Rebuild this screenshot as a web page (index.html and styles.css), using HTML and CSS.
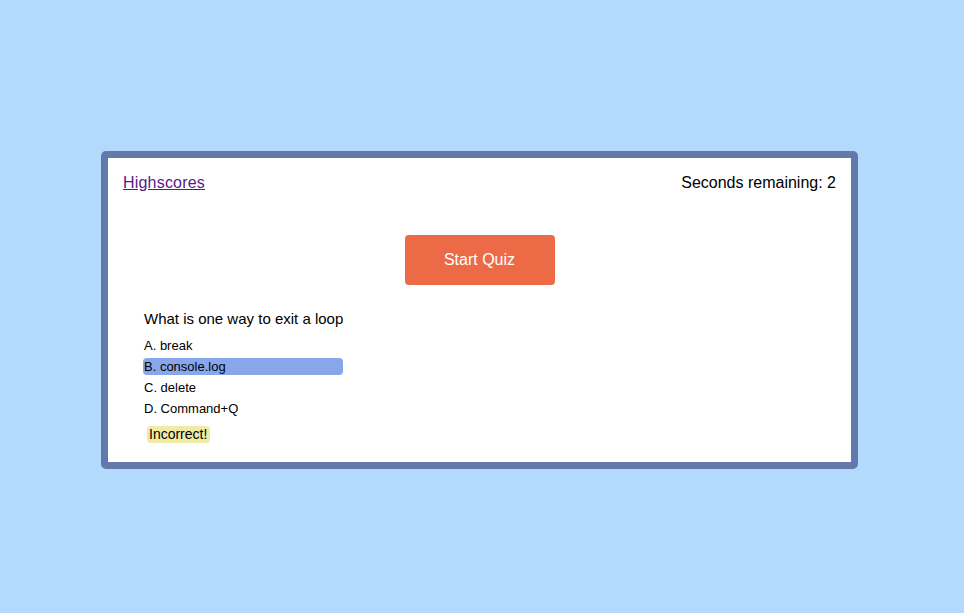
FILE: index.html
```html
<!DOCTYPE html>
<html>
<head>
<meta charset="utf-8">
<title>Quiz</title>
<link rel="stylesheet" href="styles.css">
</head>
<body>
<div class="card">
  <header class="top">
    <a class="hs" href="#">Highscores</a>
    <span class="timer">Seconds remaining: 2</span>
  </header>
  <div class="start-wrap"><button class="start">Start Quiz</button></div>
  <section class="quiz">
    <p class="question">What is one way to exit a loop</p>
    <ul class="options">
      <li>A. break</li>
      <li class="picked">B. console.log</li>
      <li>C. delete</li>
      <li>D. Command+Q</li>
    </ul>
    <span class="result">Incorrect!</span>
  </section>
</div>
</body>
</html>
```
FILE: styles.css
```css
html, body { margin: 0; padding: 0; }
body {
  background: #b3d9fd;
  font-family: "Liberation Sans", Arial, sans-serif;
  color: #000;
  min-height: 613px;
  overflow: hidden;
}
.card {
  margin: 151px 0 0 101px;
  width: 743px;
  background: #fff;
  border: 7px solid #6479ab;
  border-radius: 5px;
  padding-bottom: 19px;
}
.top {
  display: flex;
  justify-content: space-between;
  padding: 15px 15px 0 15px;
  font-size: 16px;
  line-height: 19px;
}
.hs { color: #551a8b; text-decoration: underline; letter-spacing: 0.2px; }
.start-wrap { display: flex; justify-content: center; margin-top: 43px; }
.start {
  width: 150px;
  height: 50px;
  background: #ec6b46;
  color: #fff;
  border: none;
  border-radius: 4px;
  font-family: inherit;
  font-size: 16px;
}
.quiz { padding-left: 35px; margin-top: 25px; }
.question { margin: 0 0 0 1px; font-size: 15px; line-height: 18px; }
.options { list-style: none; margin: 9px 0 0; padding: 0; font-size: 13px; }
.options li {
  width: 199px;
  height: 17px;
  line-height: 17px;
  margin-bottom: 4px;
  padding-left: 1px;
  border-radius: 4px;
}
.options li.picked { background: #88a7ea; }
.result {
  display: inline-block;
  margin: 5px 0 0 4px;
  padding: 0 3px 0 2px;
  background: #efeba5;
  border-radius: 4px;
  font-size: 14px;
  line-height: 17px;
}
```
